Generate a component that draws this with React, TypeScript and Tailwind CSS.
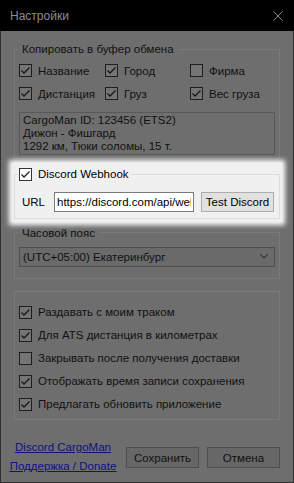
import React from "react";

const Check = ({ on, lit }: { on: boolean; lit?: boolean }) => (
  <span
    className={`flex h-[13px] w-[13px] shrink-0 items-center justify-center border ${
      lit ? "border-[#333333] bg-white" : "border-[#1e1e1e] bg-[#757575]"
    }`}
  >
    {on && (
      <svg width="11" height="11" viewBox="0 0 11 11">
        <polyline points="1.5,5.5 4,8 9.5,2.5" fill="none" stroke={lit ? "#222222" : "#161616"} strokeWidth="1.3" />
      </svg>
    )}
  </span>
);

const Row = ({ on, label }: { on: boolean; label: string }) => (
  <div className="flex h-[23px] items-center gap-[6px]">
    <Check on={on} />
    <span className="whitespace-nowrap">{label}</span>
  </div>
);

const App: React.FC = () => {
  return (
    <div
      className="flex h-[483px] w-[294px] flex-col overflow-hidden bg-black text-[11.5px] text-[#111111]"
      style={{ fontFamily: '"Liberation Sans", Arial, sans-serif' }}
    >
      {/* title bar */}
      <div className="flex h-[31px] shrink-0 items-center justify-between pl-[10px] pr-[11px] text-[12px] text-[#8c8c8c]">
        <span>Настройки</span>
        <svg width="10" height="10" viewBox="0 0 10 10">
          <path d="M0.5 0.5L9.5 9.5M9.5 0.5L0.5 9.5" stroke="#8c8c8c" strokeWidth="1" />
        </svg>
      </div>

      {/* body */}
      <div className="flex flex-1 flex-col border-x border-b border-[#303030] bg-[#6e6e6e] px-[13px] leading-[16px]">
        <fieldset className="mt-[10px] border border-[#7a7a7a] pb-[3px] pl-[4px] pr-[4px]">
          <legend className="-ml-[1px] px-[4px]">Копировать в буфер обмена</legend>
          <div className="mt-[2px] grid grid-cols-[86px_85px_1fr]">
            <Row on label="Название" />
            <Row on label="Город" />
            <Row on={false} label="Фирма" />
            <Row on label="Дистанция" />
            <Row on label="Груз" />
            <Row on label="Вес груза" />
          </div>
          <div className="mt-[7px] h-[43px] border border-[#585858] pl-[3px] pt-[1px] leading-[13px]">
            <div>CargoMan ID: 123456 (ETS2)</div>
            <div>Дижон - Фишгард</div>
            <div>1292 км, Тюки соломы, 15 т.</div>
          </div>
        </fieldset>

        {/* highlighted webhook block */}
        <div className="-mx-[2px] mt-[4px] bg-[#f0f0f0] px-[2px] py-[3px] text-black shadow-[0_0_5px_3px_#ffffff]">
          <fieldset className="border border-[#dcdcdc] pb-[6px]">
            <legend className="ml-[2px] px-[2px]">
              <span className="inline-flex items-center gap-[6px]">
                <Check on lit />
                Discord Webhook
              </span>
            </legend>
            <div className="mt-[8px] flex items-center pl-[7px]">
              <span className="w-[32px]">URL</span>
              <input
                readOnly
                value="https://discord.com/api/webhooks/123456"
                className="h-[20px] w-[140px] border border-[#7a7a7a] bg-white px-[2px] outline-none"
              />
              <button className="ml-[7px] h-[20px] w-[73px] border border-[#adadad] bg-[#e1e1e1]">
                Test Discord
              </button>
            </div>
          </fieldset>
        </div>

        <fieldset className="mt-[3px] border border-[#7a7a7a] px-[4px] pb-[11px]">
          <legend className="-ml-[1px] px-[4px]">Часовой пояс</legend>
          <div className="mt-[6px] flex h-[20px] items-center justify-between border border-[#4f4f4f] bg-[#6a6a6a] pl-[3px] pr-[6px]">
            <span>(UTC+05:00) Екатеринбург</span>
            <svg width="8" height="5" viewBox="0 0 8 5">
              <polyline points="0.5,0.5 4,4 7.5,0.5" fill="none" stroke="#1a1a1a" strokeWidth="1" />
            </svg>
          </div>
        </fieldset>

        <div className="mt-[12px] border border-[#7a7a7a] pb-[3px] pl-[4px] pt-[9px]">
          <Row on label="Раздавать с моим траком" />
          <Row on label="Для ATS дистанция в километрах" />
          <Row on={false} label="Закрывать после получения доставки" />
          <Row on label="Отображать время записи сохранения" />
          <Row on label="Предлагать обновить приложение" />
        </div>

        <div className="mt-[18px] flex items-center justify-between">
          <div className="-ml-[3px] flex w-[104px] flex-col items-center whitespace-nowrap leading-[19px] text-[#10107f] underline">
            <a>Discord CargoMan</a>
            <a>Поддержка / Donate</a>
          </div>
          <div className="mt-[2px] flex gap-[8px]">
            <button className="h-[21px] w-[73px] border border-[#4f4f4f] bg-[#676767]">Сохранить</button>
            <button className="h-[21px] w-[73px] border border-[#4f4f4f] bg-[#676767]">Отмена</button>
          </div>
        </div>
      </div>
    </div>
  );
};

export default App;
